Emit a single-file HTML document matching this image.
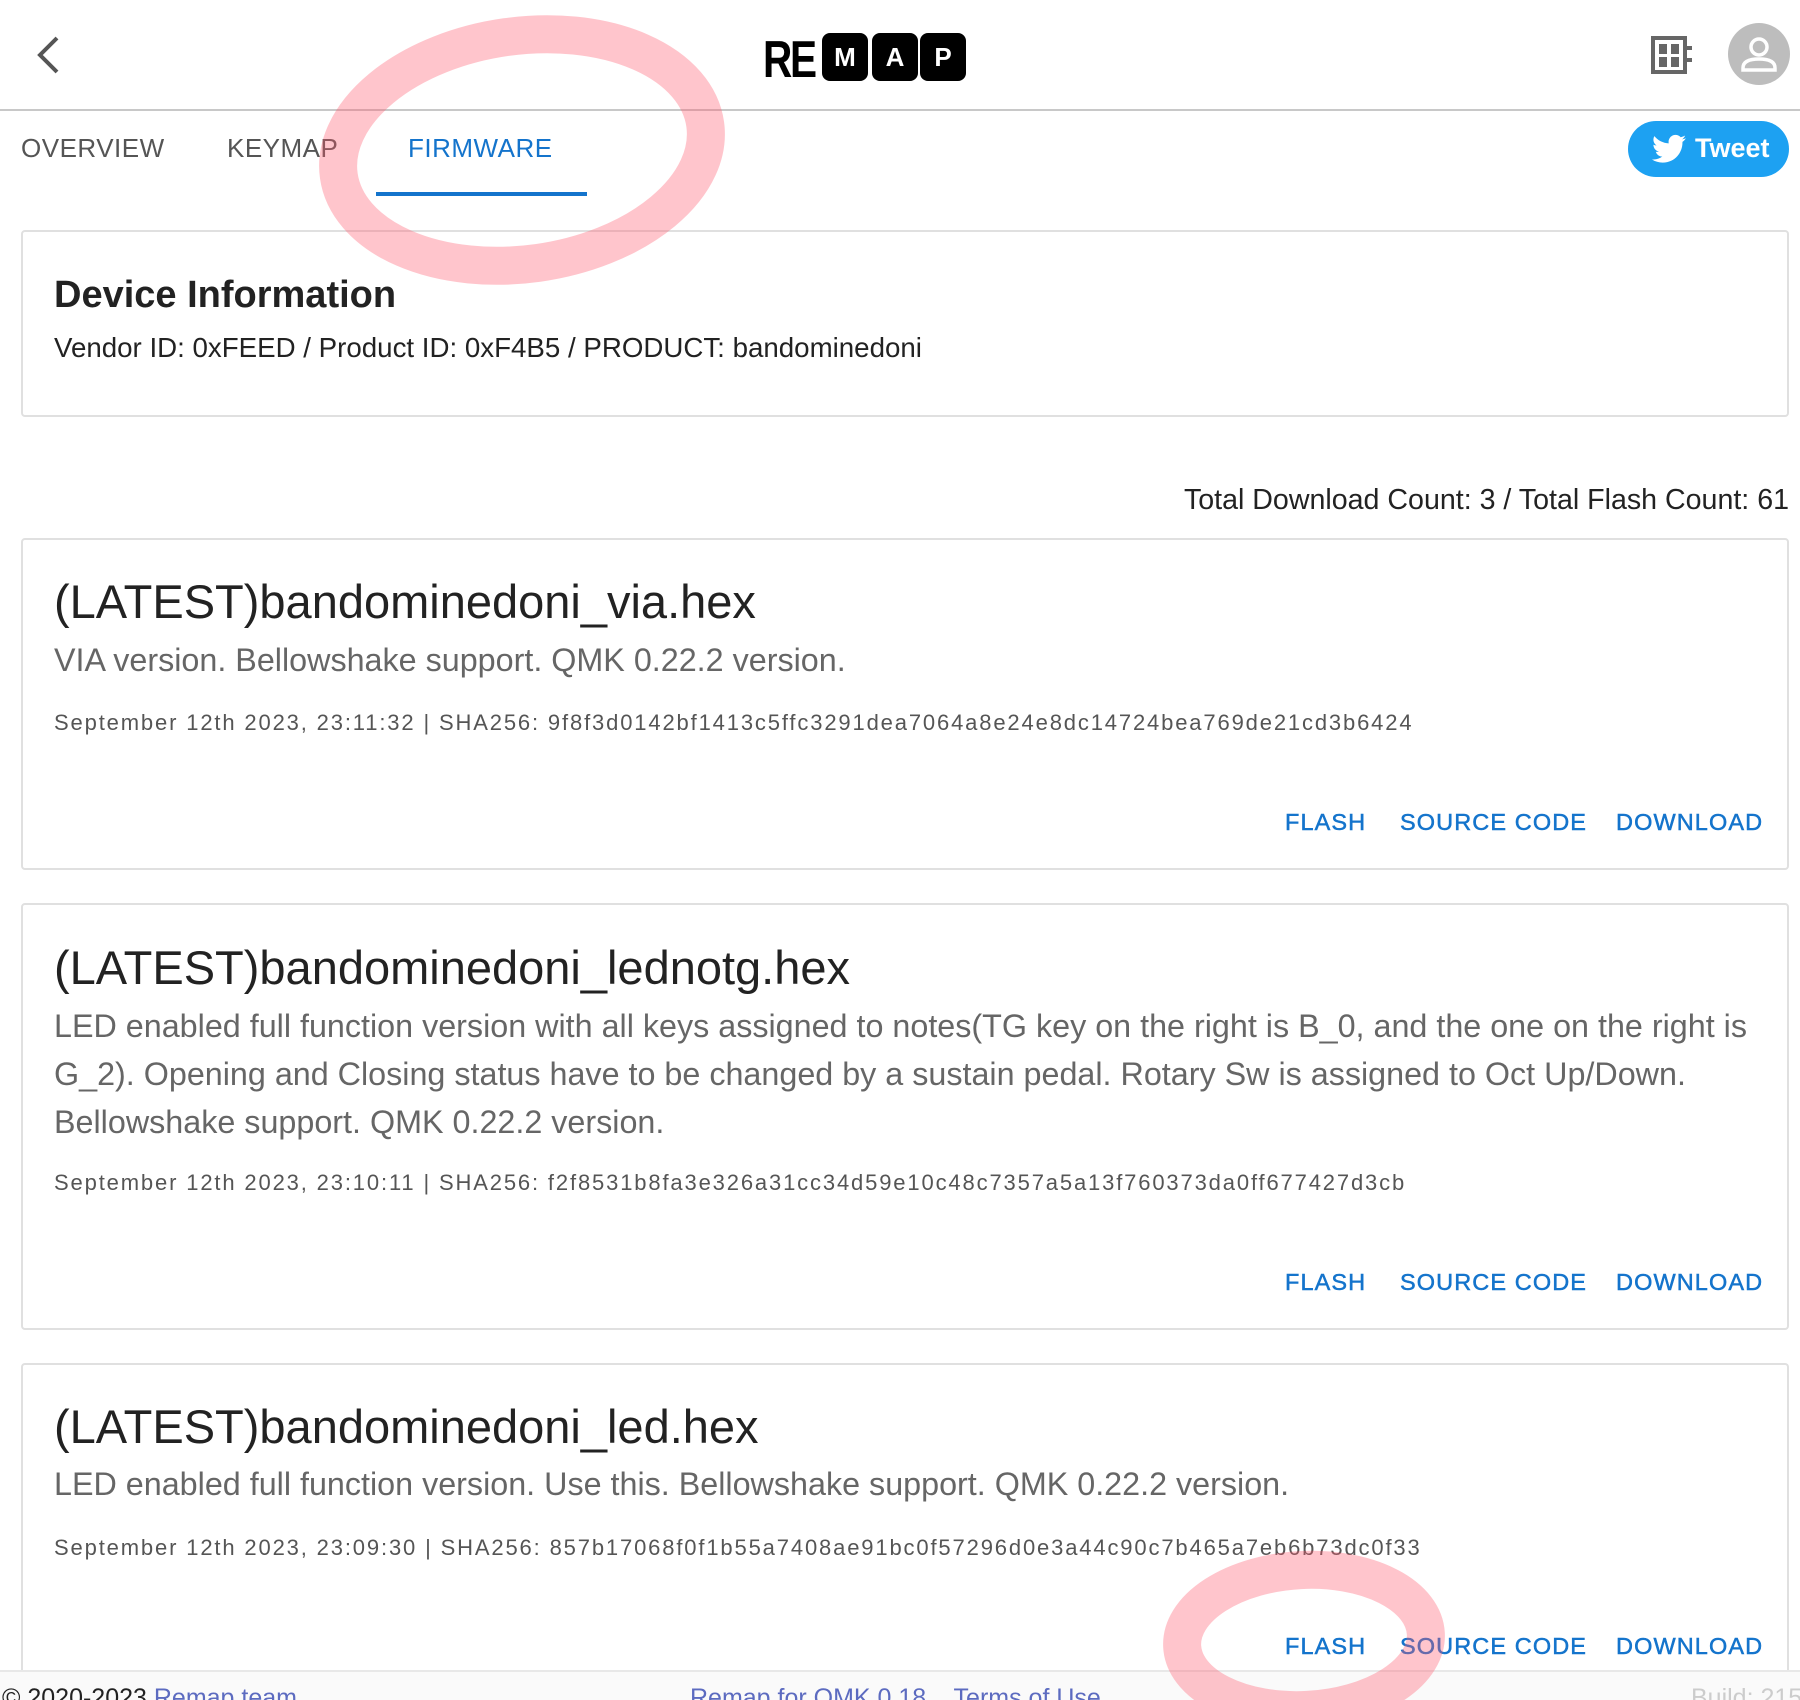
<!DOCTYPE html>
<html style="width:1800px;height:1700px;overflow:hidden"><head><meta charset="utf-8"><style>
*{box-sizing:border-box;margin:0;padding:0}
body{width:1800px;height:1700px;overflow:hidden;background:#fff;font-family:"Liberation Sans",sans-serif;position:relative;color:#222}
.abs{position:absolute;white-space:nowrap}
.hdr{position:absolute;left:0;top:0;width:1800px;height:111px;border-bottom:2px solid #c8c8c8}
.tab{position:absolute;top:133px;font-size:26px;color:#555;letter-spacing:0.5px}
.card{position:absolute;left:21px;width:1768px;border:2px solid #e0e0e0;border-radius:4px;background:#fff}
.t{position:absolute;left:31px;font-size:47px;color:#222;white-space:nowrap}
.d{position:absolute;left:31px;font-size:32.3px;color:#666;line-height:48px;white-space:nowrap}
.m{position:absolute;left:31px;font-size:22px;color:#555;letter-spacing:1.85px;white-space:nowrap}
.b{position:absolute;font-size:23.5px;color:#1474cc;letter-spacing:1.1px;white-space:nowrap;-webkit-text-stroke:0.5px #1474cc}
</style></head><body>
<div class="hdr"></div>
<svg class="abs" style="left:32px;top:34px" width="30" height="42" viewBox="0 0 30 42"><path d="M25 4 L8 21 L25 38" fill="none" stroke="#555" stroke-width="4"/></svg>
<div class="abs" style="left:763px;top:30px;font-size:52px;font-weight:bold;letter-spacing:-3px;transform:scaleX(0.78);transform-origin:left;color:#000">RE</div>
<div class="abs" style="left:822px;top:33px;width:46px;height:48px;background:#000;border-radius:8px;color:#fff;font-weight:bold;font-size:26px;text-align:center;line-height:48px">M</div>
<div class="abs" style="left:872px;top:33px;width:46px;height:48px;background:#000;border-radius:8px;color:#fff;font-weight:bold;font-size:26px;text-align:center;line-height:48px">A</div>
<div class="abs" style="left:920px;top:33px;width:46px;height:48px;background:#000;border-radius:8px;color:#fff;font-weight:bold;font-size:26px;text-align:center;line-height:48px">P</div>
<svg class="abs" style="left:1651px;top:36px" width="42" height="38" viewBox="0 0 42 38"><rect x="2" y="2" width="32" height="34" fill="none" stroke="#666" stroke-width="4"/><rect x="8" y="8" width="8" height="10" fill="#666"/><rect x="20" y="8" width="8" height="10" fill="#666"/><rect x="8" y="21" width="8" height="10" fill="#666"/><rect x="20" y="21" width="8" height="10" fill="#666"/><rect x="36" y="10" width="5" height="4" fill="#666"/><rect x="36" y="22" width="5" height="4" fill="#666"/></svg>
<svg class="abs" style="left:1728px;top:23px" width="62" height="62" viewBox="0 0 62 62"><circle cx="31" cy="31" r="31" fill="#bdbdbd"/><circle cx="31" cy="24" r="8" fill="none" stroke="#fff" stroke-width="3.5"/><path d="M15 45 Q15 36 31 36 Q47 36 47 45 V47 H15 Z" fill="none" stroke="#fff" stroke-width="3.5"/></svg>

<div class="tab" style="left:21px">OVERVIEW</div>
<div class="tab" style="left:227px">KEYMAP</div>
<div class="tab" style="left:408px;color:#1474cc">FIRMWARE</div>
<div class="abs" style="left:376px;top:192px;width:211px;height:4px;background:#1474cc"></div>
<div class="abs" style="left:1628px;top:121px;width:161px;height:56px;background:#1da1f2;border-radius:28px"></div>
<svg class="abs" style="left:1652px;top:134px" width="34" height="30" viewBox="0 0 24 20"><path d="M24 2.4c-.9.4-1.8.6-2.8.8 1-.6 1.8-1.6 2.2-2.7-1 .6-2 1-3.1 1.2C19.3.7 18 0 16.6 0c-2.7 0-4.9 2.2-4.9 4.9 0 .4 0 .8.1 1.1C7.7 5.8 4.1 3.9 1.7.9c-.4.7-.7 1.6-.7 2.5 0 1.7.9 3.2 2.2 4.1-.8 0-1.6-.2-2.2-.6v.1c0 2.4 1.7 4.4 3.9 4.8-.4.1-.8.2-1.3.2-.3 0-.6 0-.9-.1.6 2 2.4 3.4 4.6 3.4-1.700 1.3-3.8 2.1-6.1 2.1H0c2.2 1.4 4.8 2.2 7.5 2.2 9.1 0 14-7.5 14-14v-.6c1-.7 1.8-1.6 2.5-2.6z" fill="#fff"/></svg>
<div class="abs" style="left:1695px;top:133px;font-size:27px;font-weight:bold;color:#fff">Tweet</div>

<div class="card" style="top:230px;height:187px">
<div class="abs" style="left:31px;top:42px;font-size:38px;font-weight:bold;color:#222">Device Information</div>
<div class="abs" style="left:31px;top:100px;font-size:27.7px;color:#222">Vendor ID: 0xFEED / Product ID: 0xF4B5 / PRODUCT: bandominedoni</div>
</div>
<div class="abs" style="right:11px;top:484px;font-size:28.6px;color:#222">Total Download Count: 3 / Total Flash Count: 61</div>

<div class="card" style="top:538px;height:332px">
<div class="t" style="top:34px">(LATEST)bandominedoni_via.hex</div>
<div class="d" style="top:96px">VIA version. Bellowshake support. QMK 0.22.2 version.</div>
<div class="m" style="top:170px">September 12th 2023, 23:11:32 | SHA256: 9f8f3d0142bf1413c5ffc3291dea7064a8e24e8dc14724bea769de21cd3b6424</div>
<div class="b" style="left:1262px;top:269px">FLASH</div><div class="b" style="left:1377px;top:269px">SOURCE CODE</div><div class="b" style="left:1593px;top:269px">DOWNLOAD</div>
</div>

<div class="card" style="top:903px;height:427px">
<div class="t" style="top:35px">(LATEST)bandominedoni_lednotg.hex</div>
<div class="d" style="top:97px">LED enabled full function version with all keys assigned to notes(TG key on the right is B_0, and the one on the right is<br>G_2). Opening and Closing status have to be changed by a sustain pedal. Rotary Sw is assigned to Oct Up/Down.<br>Bellowshake support. QMK 0.22.2 version.</div>
<div class="m" style="top:265px">September 12th 2023, 23:10:11 | SHA256: f2f8531b8fa3e326a31cc34d59e10c48c7357a5a13f760373da0ff677427d3cb</div>
<div class="b" style="left:1262px;top:364px">FLASH</div><div class="b" style="left:1377px;top:364px">SOURCE CODE</div><div class="b" style="left:1593px;top:364px">DOWNLOAD</div>
</div>

<div class="card" style="top:1363px;height:337px;border-bottom:none">
<div class="t" style="top:34px">(LATEST)bandominedoni_led.hex</div>
<div class="d" style="top:95px">LED enabled full function version. Use this. Bellowshake support. QMK 0.22.2 version.</div>
<div class="m" style="top:170px">September 12th 2023, 23:09:30 | SHA256: 857b17068f0f1b55a7408ae91bc0f57296d0e3a44c90c7b465a7eb6b73dc0f33</div>
<div class="b" style="left:1262px;top:268px">FLASH</div><div class="b" style="left:1377px;top:268px">SOURCE CODE</div><div class="b" style="left:1593px;top:268px">DOWNLOAD</div>
</div>

<div class="abs" style="left:0;top:1670px;width:1800px;height:30px;background:#fafafa;border-top:2px solid #e8e8e8"></div>
<div class="abs" style="left:2px;top:1684px;font-size:25px;color:#222">© 2020-2023 <span style="color:#5c6bc0">Remap team</span></div>
<div class="abs" style="left:690px;top:1684px;font-size:25px;color:#5c6bc0">Remap for QMK 0.18 &nbsp;&nbsp; Terms of Use</div>
<div class="abs" style="left:1691px;top:1684px;font-size:25px;color:#ccc">Build: 215</div>

<svg class="abs" style="left:0;top:0" width="1800" height="1700">
<g fill="none" stroke="#ff5a6e" stroke-opacity="0.35" stroke-width="38">
<ellipse cx="522" cy="150" rx="185" ry="114" transform="rotate(-8 522 150)"/>
<ellipse cx="1304" cy="1640" rx="122" ry="70" transform="rotate(-3 1304 1640)"/>
</g>
</svg>
</body></html>
